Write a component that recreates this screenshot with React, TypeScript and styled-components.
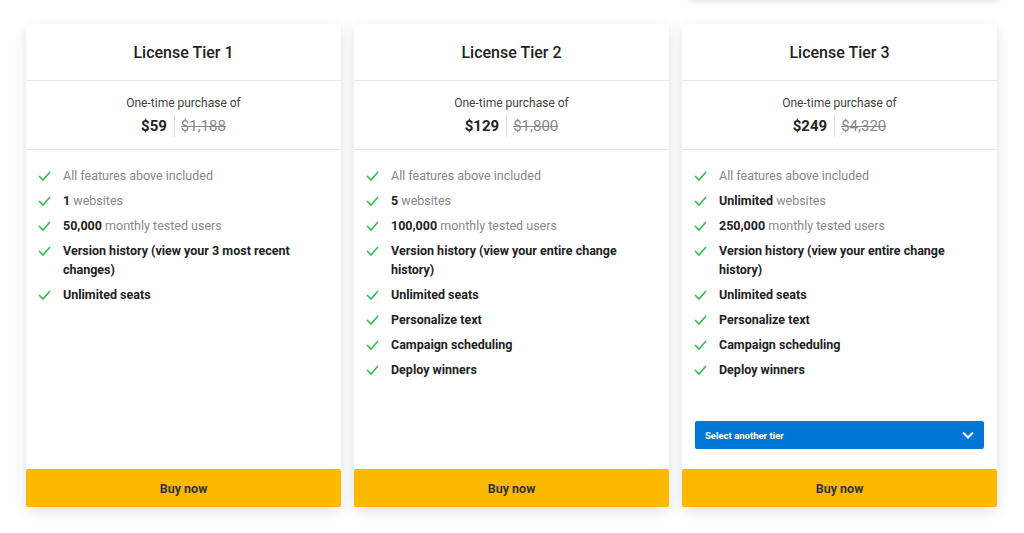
import React from 'react';
import styled, { createGlobalStyle } from 'styled-components';

const Global = createGlobalStyle`
  body { margin: 0; background: #fff; font-family: Roboto, "Liberation Sans", sans-serif; }
`;

const Page = styled.div`
  width: 1024px;
  height: 533px;
  overflow: hidden;
  position: relative;
`;

const TopStrip = styled.div`
  position: absolute;
  top: -20px;
  left: 690px;
  width: 308px;
  height: 20px;
  background: #fff;
  box-shadow: 0 2px 6px rgba(0, 0, 0, 0.12);
`;

const Grid = styled.div`
  display: grid;
  grid-template-columns: repeat(3, 315px);
  column-gap: 13px;
  padding: 24px 0 0 26px;
`;

const Card = styled.div`
  height: 483px;
  display: flex;
  flex-direction: column;
  background: #fff;
  border-radius: 3px;
  box-shadow: 0 4px 14px rgba(0, 0, 0, 0.12);
`;

const Header = styled.div`
  height: 56px;
  display: flex;
  align-items: center;
  justify-content: center;
  border-bottom: 1px solid #e8e8e8;
  font-size: 16px;
  font-weight: 500;
  color: #222;
`;

const PriceBox = styled.div`
  height: 69px;
  border-bottom: 1px solid #e8e8e8;
  display: flex;
  flex-direction: column;
  align-items: center;
  padding-top: 15px;
  box-sizing: border-box;
  font-size: 12px;
  color: #444;
`;

const PriceRow = styled.div`
  display: flex;
  align-items: center;
  margin-top: 5px;
`;

const Price = styled.span`
  font-size: 15px;
  font-weight: 700;
  color: #222;
  padding-right: 7px;
  border-right: 1px solid #ddd;
  line-height: 22px;
`;

const OldPrice = styled.span`
  font-size: 15px;
  color: #888;
  text-decoration: line-through;
  padding-left: 6px;
`;

const Features = styled.ul`
  list-style: none;
  margin: 0;
  padding: 16px 20px 0 12px;
  flex: 1;
`;

const Feature = styled.li`
  display: flex;
  gap: 12px;
  font-size: 12.5px;
  line-height: 19px;
  color: #888;
  margin-bottom: 6px;
  b { color: #222; font-weight: 700; }
`;

const Check = styled.svg`
  width: 13px;
  height: 19px;
  flex-shrink: 0;
`;

const Select = styled.div`
  margin: 0 13px 20px;
  height: 28px;
  border-radius: 2px;
  background: #0077d6;
  color: #fff;
  font-size: 9.5px;
  font-weight: 700;
  display: flex;
  align-items: center;
  justify-content: space-between;
  padding: 0 10px;
`;

const Buy = styled.button`
  height: 38px;
  border: none;
  border-radius: 2px;
  background: #fdb900;
  font-family: inherit;
  font-size: 12.5px;
  font-weight: 700;
  color: #333;
`;

type Tier = {
  n: number;
  price: string;
  old: string;
  sites: string;
  users: string;
  history: string;
  extra: boolean;
};

const tiers: Tier[] = [
  { n: 1, price: '$59', old: '$1,188', sites: '1', users: '50,000', history: 'Version history (view your 3 most recent changes)', extra: false },
  { n: 2, price: '$129', old: '$1,800', sites: '5', users: '100,000', history: 'Version history (view your entire change history)', extra: false },
  { n: 3, price: '$249', old: '$4,320', sites: 'Unlimited', users: '250,000', history: 'Version history (view your entire change history)', extra: true },
];

const CheckIcon = () => (
  <Check viewBox="0 0 13 19">
    <path d="M1 10l4 4 7-8" fill="none" stroke="#2ebd59" strokeWidth="1.6" />
  </Check>
);

export default function App() {
  return (
    <Page>
      <Global />
      <TopStrip />
      <Grid>
        {tiers.map((t) => (
          <Card key={t.n}>
            <Header>License Tier {t.n}</Header>
            <PriceBox>
              One-time purchase of
              <PriceRow>
                <Price>{t.price}</Price>
                <OldPrice>{t.old}</OldPrice>
              </PriceRow>
            </PriceBox>
            <Features>
              <Feature><CheckIcon /><span>All features above included</span></Feature>
              <Feature><CheckIcon /><span><b>{t.sites}</b> websites</span></Feature>
              <Feature><CheckIcon /><span><b>{t.users}</b> monthly tested users</span></Feature>
              <Feature><CheckIcon /><span><b>{t.history}</b></span></Feature>
              <Feature><CheckIcon /><span><b>Unlimited seats</b></span></Feature>
              {t.n > 1 && (
                <>
                  <Feature><CheckIcon /><span><b>Personalize text</b></span></Feature>
                  <Feature><CheckIcon /><span><b>Campaign scheduling</b></span></Feature>
                  <Feature><CheckIcon /><span><b>Deploy winners</b></span></Feature>
                </>
              )}
            </Features>
            {t.extra && (
              <Select>
                Select another tier
                <svg width="12" height="8" viewBox="0 0 12 8">
                  <path d="M1 1.5l5 5 5-5" fill="none" stroke="#fff" strokeWidth="2" />
                </svg>
              </Select>
            )}
            <Buy>Buy now</Buy>
          </Card>
        ))}
      </Grid>
    </Page>
  );
}
